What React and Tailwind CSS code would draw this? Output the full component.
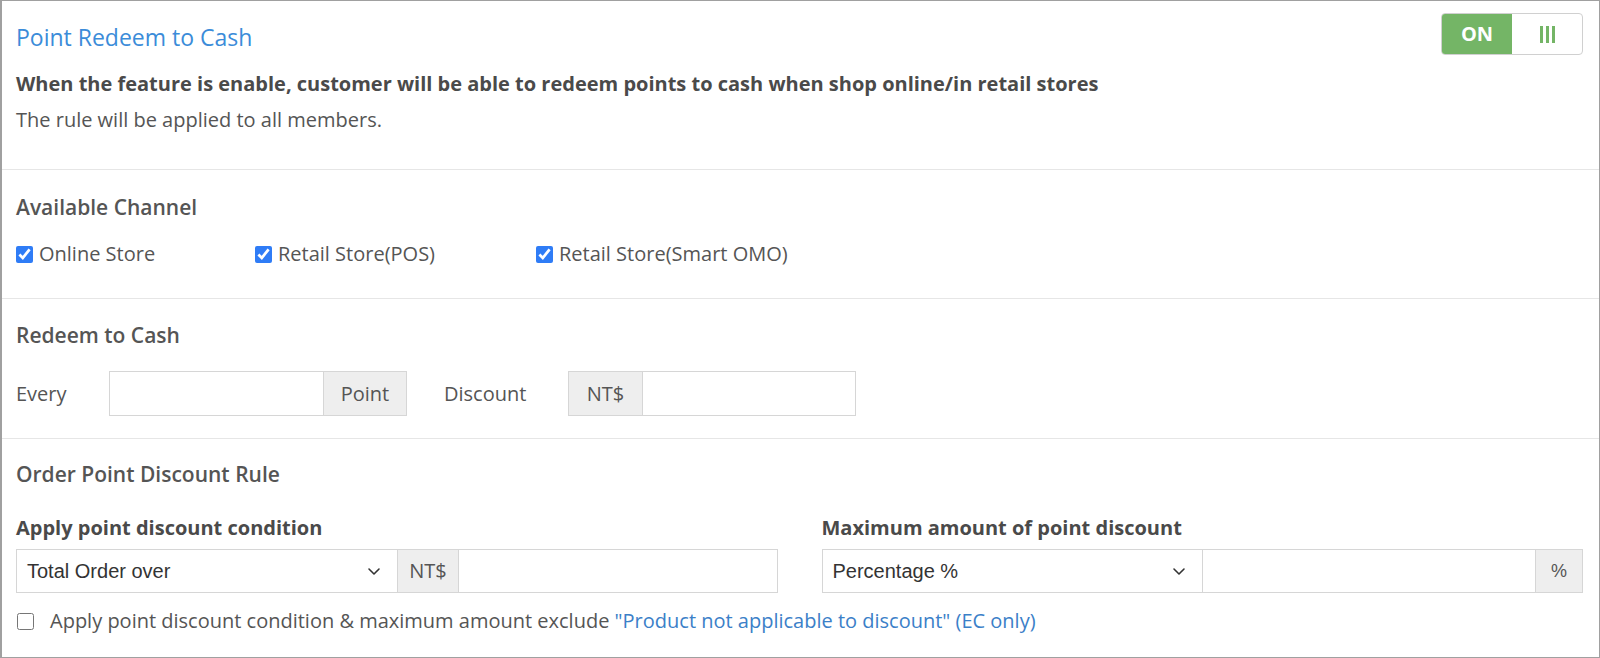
import React from "react";

const Chevron = () => (
  <svg width="14" height="9" viewBox="0 0 14 9" fill="none" stroke="#333" strokeWidth="1.6" strokeLinecap="round" strokeLinejoin="round">
    <path d="M2 2l5 5 5-5" />
  </svg>
);

const Check = ({ checked, className = "" }) => (
  <input
    type="checkbox"
    defaultChecked={checked}
    className={`w-[17px] h-[17px] m-0 accent-[#2f7cf6] ${className}`}
  />
);

export default function App() {
  return (
    <div
      className="w-[1600px] h-[658px] bg-white border border-[#a0a0a0] border-l-2 text-[#555] overflow-hidden"
      style={{ fontFamily: '"Open Sans", "Noto Sans", sans-serif' }}
    >
      {/* Section 1 */}
      <div className="pl-[14px] pr-[16px] pt-[21px] pb-[35px] border-b border-[#e6e6e6]">
        <div className="flex items-start justify-between">
          <div className="text-[23px] leading-[30px] text-[#3b8cd9]">Point Redeem to Cash</div>
          <div className="flex h-[42px] w-[142px] rounded-[4px] border border-[#d0d0d0] overflow-hidden -mt-[9px]">
            <div className="w-[70px] bg-[#74b566] text-white font-bold text-[20px] flex items-center justify-center">ON</div>
            <div className="flex-1 flex items-center justify-center gap-[3px]">
              <span className="w-[3px] h-[17px] bg-[#74b566]" />
              <span className="w-[3px] h-[17px] bg-[#74b566]" />
              <span className="w-[3px] h-[17px] bg-[#74b566]" />
            </div>
          </div>
        </div>
        <div className="mt-[15px] text-[20px] leading-[28px] font-bold text-[#4a4a4a]">
          When the feature is enable, customer will be able to redeem points to cash when shop online/in retail stores
        </div>
        <div className="mt-[8px] text-[20px] leading-[28px]">The rule will be applied to all members.</div>
      </div>

      {/* Section 2 */}
      <div className="pl-[14px] pt-[23px] pb-[30px] border-b border-[#e6e6e6]">
        <div className="text-[21px] leading-[28px] font-semibold text-[#555]">Available Channel</div>
        <div className="mt-[19px] flex items-center text-[20px] leading-[28px]">
          <label className="flex items-center gap-[6px] w-[239px]">
            <Check checked />
            <span>Online Store</span>
          </label>
          <label className="flex items-center gap-[6px] w-[281px]">
            <Check checked />
            <span>Retail Store(POS)</span>
          </label>
          <label className="flex items-center gap-[6px]">
            <Check checked />
            <span>Retail Store(Smart OMO)</span>
          </label>
        </div>
      </div>

      {/* Section 3 */}
      <div className="pl-[14px] pt-[22px] pb-[22px] border-b border-[#e6e6e6]">
        <div className="text-[21px] leading-[28px] font-semibold">Redeem to Cash</div>
        <div className="mt-[22px] flex items-center text-[20px]">
          <span className="w-[93px]">Every</span>
          <div className="flex h-[45px] border border-[#d6d6d6]">
            <div className="w-[213px] bg-white" />
            <div className="w-[83px] bg-[#eee] border-l border-[#d6d6d6] flex items-center justify-center">Point</div>
          </div>
          <span className="ml-[37px] w-[124px]">Discount</span>
          <div className="flex h-[45px] border border-[#d6d6d6]">
            <div className="w-[74px] bg-[#eee] border-r border-[#d6d6d6] flex items-center justify-center">NT$</div>
            <div className="w-[212px] bg-white" />
          </div>
        </div>
      </div>

      {/* Section 4 */}
      <div className="pl-[14px] pr-[16px] pt-[21px] pb-[20px]">
        <div className="text-[21px] leading-[28px] font-semibold">Order Point Discount Rule</div>
        <div className="mt-[26px] grid grid-cols-2 gap-x-[44px]">
          <div>
            <div className="text-[20px] leading-[28px] font-bold text-[#4a4a4a]">Apply point discount condition</div>
            <div className="mt-[7px] flex h-[44px] border border-[#d6d6d6]">
              <div
                className="w-[380px] flex items-center justify-between pl-[10px] pr-[16px] text-[20px] text-[#333]"
                style={{ fontFamily: '"Liberation Sans", Arial, sans-serif' }}
              >
                <span>Total Order over</span>
                <Chevron />
              </div>
              <div className="w-[62px] bg-[#eee] border-l border-r border-[#d6d6d6] flex items-center justify-center text-[20px]">NT$</div>
              <div className="flex-1 bg-white" />
            </div>
          </div>
          <div>
            <div className="text-[20px] leading-[28px] font-bold text-[#4a4a4a]">Maximum amount of point discount</div>
            <div className="mt-[7px] flex h-[44px] border border-[#d6d6d6]">
              <div
                className="w-[380px] flex items-center justify-between pl-[10px] pr-[16px] text-[20px] text-[#333] border-r border-[#d6d6d6]"
                style={{ fontFamily: '"Liberation Sans", Arial, sans-serif' }}
              >
                <span>Percentage %</span>
                <Chevron />
              </div>
              <div className="flex-1 bg-white" />
              <div
                className="w-[47px] bg-[#eee] border-l border-[#d6d6d6] flex items-center justify-center text-[18px]"
                style={{ fontFamily: '"Liberation Sans", Arial, sans-serif' }}
              >
                %
              </div>
            </div>
          </div>
        </div>
        <label className="mt-[14px] flex items-center text-[20px] leading-[28px]">
          <Check className="ml-[1px]" />
          <span className="ml-[16px]">
            Apply point discount condition &amp; maximum amount exclude{" "}
            <span className="text-[#3b80c8]">"Product not applicable to discount" (EC only)</span>
          </span>
        </label>
      </div>
    </div>
  );
}
